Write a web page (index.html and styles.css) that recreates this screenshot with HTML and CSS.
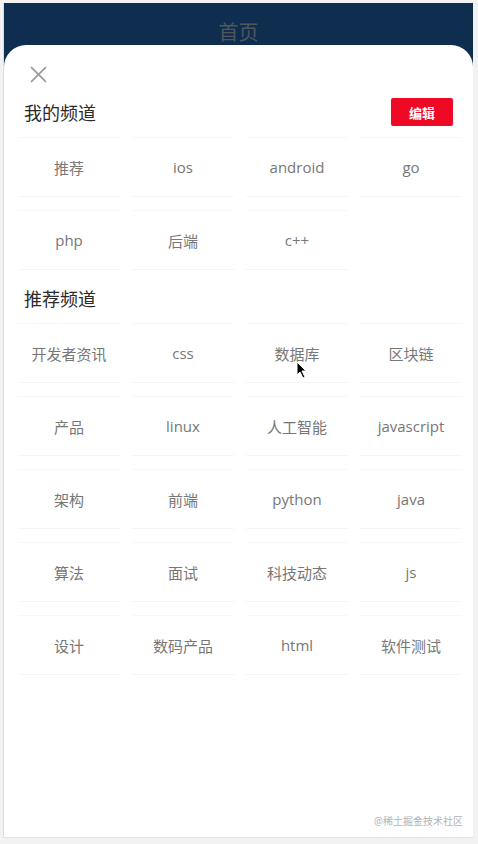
FILE: index.html
```html
<!DOCTYPE html>
<html>

<head>
	<meta charset="utf-8" />
	<link rel="stylesheet" href="styles.css">
</head>

<body>

	<div class="app">
		<div class="nav-bar">首页</div>

		<div class="channel-sheet">
			<svg class="close-icon" viewBox="0 0 16 16" width="17" height="17">
				<path d="M1 1 L15 15 M15 1 L1 15" stroke="#9a9a9a" stroke-width="1.6" fill="none" />
			</svg>

			<div class="section-head">
				<span class="section-title">我的频道</span>
				<button class="edit-btn">编辑</button>
			</div>
			<div class="channel-grid">
				<div class="channel-item">推荐</div>
				<div class="channel-item">ios</div>
				<div class="channel-item">android</div>
				<div class="channel-item">go</div>
				<div class="channel-item">php</div>
				<div class="channel-item">后端</div>
				<div class="channel-item">c++</div>
			</div>

			<div class="section-head">
				<span class="section-title">推荐频道</span>
			</div>
			<div class="channel-grid">
				<div class="channel-item">开发者资讯</div>
				<div class="channel-item">css</div>
				<div class="channel-item">数据库</div>
				<div class="channel-item">区块链</div>
				<div class="channel-item">产品</div>
				<div class="channel-item">linux</div>
				<div class="channel-item">人工智能</div>
				<div class="channel-item">javascript</div>
				<div class="channel-item">架构</div>
				<div class="channel-item">前端</div>
				<div class="channel-item">python</div>
				<div class="channel-item">java</div>
				<div class="channel-item">算法</div>
				<div class="channel-item">面试</div>
				<div class="channel-item">科技动态</div>
				<div class="channel-item">js</div>
				<div class="channel-item">设计</div>
				<div class="channel-item">数码产品</div>
				<div class="channel-item">html</div>
				<div class="channel-item">软件测试</div>
			</div>

			<div class="watermark">@稀土掘金技术社区</div>
		</div>

		<!-- mouse pointer captured in the screenshot -->
		<svg class="mouse-cursor" viewBox="0 0 12 18" width="12" height="18">
			<path d="M1 1 L1 14 L4 11 L7 17 L9 16 L6 10 L10 10 Z" fill="#000" stroke="#fff" stroke-width="1" />
		</svg>
	</div>

</body>

</html>
```

FILE: styles.css
```css
body {
	margin: 0;
	background-color: #f2f2f2;
	font-family: "Open Sans", "Noto Sans CJK SC", sans-serif;
}

.app {
	position: relative;
	display: flex;
	flex-direction: column;
	width: 470px;
	height: 835px;
	margin: 3px 0 0 3px;
	border-left: 1px solid #dcdcdc;
	border-bottom: 1px solid #e2e2e2;
	background-color: #0f2d4e;
	box-sizing: border-box;
}

.nav-bar {
	height: 42px;
	line-height: 60px;
	text-align: center;
	font-size: 20px;
	color: #4f5660;
}

.channel-sheet {
	position: relative;
	flex: 1;
	background: #fff;
	border-radius: 22px 22px 0 0;
	padding: 21px 11px 0 14px;
}

.close-icon {
	display: block;
	margin-left: 12px;
}

.section-head {
	display: flex;
	align-items: center;
	justify-content: space-between;
	height: 30px;
	margin-top: 14px;
	padding: 0 9px 0 6px;
}

.channel-grid + .section-head {
	margin-top: 13px;
}

.section-title {
	font-size: 18px;
	color: #2a2a2a;
}

.edit-btn {
	width: 62px;
	height: 28px;
	border: 0;
	border-radius: 2px;
	background: #ee0a24;
	color: #fff;
	font-family: inherit;
	font-size: 13px;
	font-weight: bold;
	padding: 0;
}

.channel-grid {
	display: grid;
	grid-template-columns: repeat(4, 1fr);
	column-gap: 12px;
	row-gap: 13px;
	margin-top: 10px;
}

.channel-item {
	display: flex;
	align-items: center;
	justify-content: center;
	height: 60px;
	border-top: 1px solid #f7f7f7;
	border-bottom: 1px solid #f5f5f5;
	box-sizing: border-box;
	font-size: 15px;
	color: #777;
	white-space: nowrap;
}

.watermark {
	position: absolute;
	right: 10px;
	bottom: 9px;
	font-size: 10px;
	color: #b3b3b3;
}

.mouse-cursor {
	position: absolute;
	left: 292px;
	top: 358px;
}
```
